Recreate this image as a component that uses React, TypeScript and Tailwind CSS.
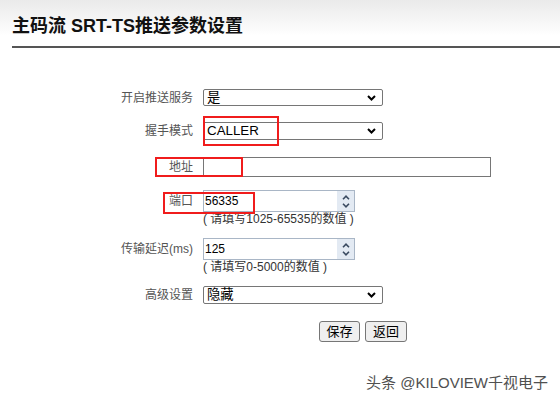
import React from "react";

const FONT = "font-['Liberation_Sans','Noto_Sans_CJK_SC',sans-serif]";

function Chevron() {
  return (
    <svg width="9" height="6" viewBox="0 0 9 6" className="absolute right-[6px] top-1/2 -translate-y-1/2">
      <path d="M1 1 L4.5 4.5 L8 1" fill="none" stroke="#000" strokeWidth="2" />
    </svg>
  );
}

function Select({ value, h }: { value: string; h: string }) {
  return (
    <div className={`relative w-[180px] ${h} border border-[#767676] rounded-[2px] bg-white flex items-center pl-[3px] text-[13.33px] text-black leading-none`}>
      <span>{value}</span>
      <Chevron />
    </div>
  );
}

function NumInput({ value }: { value: string }) {
  return (
    <div className="relative w-[152px] h-[22px] border border-[#a9b6c6] bg-white flex items-center pl-[1px] text-[12px] text-black leading-none">
      <span>{value}</span>
      <div className="absolute right-0 top-0 bottom-0 w-[17px] bg-[#e3eaf3] flex flex-col items-center justify-center gap-[3px]">
        <svg width="8" height="5" viewBox="0 0 8 5">
          <path d="M1 4.2 L4 1.2 L7 4.2" fill="none" stroke="#3a4a60" strokeWidth="1.6" />
        </svg>
        <svg width="8" height="5" viewBox="0 0 8 5">
          <path d="M1 0.8 L4 3.8 L7 0.8" fill="none" stroke="#3a4a60" strokeWidth="1.6" />
        </svg>
      </div>
    </div>
  );
}

function Row({ label, children, className }: { label: string; children: React.ReactNode; className?: string }) {
  return (
    <div className={`flex items-center ${className ?? ""}`}>
      <div className="w-[193px] text-right text-[12px] text-[#555] leading-none">{label}</div>
      <div className="ml-[10px]">{children}</div>
    </div>
  );
}

function Hint({ text }: { text: string }) {
  return <div className="ml-[203px] h-[14px] text-[12px] leading-[14px] text-[#333]">{text}</div>;
}

export default function App() {
  return (
    <div className={`relative w-[560px] h-[400px] bg-white overflow-hidden ${FONT}`}>
      <div className="h-[46px] bg-gradient-to-b from-[#eaeaea] to-white to-[78%] flex items-center pl-[12px] pt-[6px]">
        <h1 className="text-[18px] font-bold text-[#111] leading-none">主码流 SRT-TS推送参数设置</h1>
      </div>
      <div className="ml-[12px] h-[2px] bg-[#555]" />

      <Row label="开启推送服务" className="mt-[41px] h-[17px]">
        <Select value="是" h="h-[17px]" />
      </Row>
      <Row label="握手模式" className="mt-[16px] h-[18px]">
        <Select value="CALLER" h="h-[18px]" />
      </Row>
      <Row label="地址" className="mt-[17px] h-[20px]">
        <div className="w-[288px] h-[20px] border border-[#767676] bg-white" />
      </Row>
      <Row label="端口" className="mt-[13px] h-[22px]">
        <NumInput value="56335" />
      </Row>
      <Hint text="( 请填写1025-65535的数值 )" />
      <Row label="传输延迟(ms)" className="mt-[12px] h-[22px]">
        <NumInput value="125" />
      </Row>
      <Hint text="( 请填写0-5000的数值 )" />
      <Row label="高级设置" className="mt-[12px] h-[18px]">
        <Select value="隐藏" h="h-[18px]" />
      </Row>

      <div className="mt-[17px] ml-[319px] flex gap-[5px]">
        <button className="w-[41px] h-[21px] border border-[#767676] rounded-[3px] bg-[#efefef] text-[13px] leading-none text-black">保存</button>
        <button className="w-[42px] h-[21px] border border-[#767676] rounded-[3px] bg-[#efefef] text-[13px] leading-none text-black">返回</button>
      </div>

      <div className="absolute right-[12px] top-[374px] text-[15px] leading-[18px] text-[#505050]">头条 @KILOVIEW千视电子</div>

      {/* annotation boxes */}
      <div className="absolute left-[203px] top-[116px] w-[76px] h-[30px] border-2 border-[#f01c1c]" />
      <div className="absolute left-[155px] top-[157px] w-[88px] h-[20px] border-2 border-[#f01c1c]" />
      <div className="absolute left-[163px] top-[192px] w-[92px] h-[22px] border-2 border-[#f01c1c]" />
    </div>
  );
}
